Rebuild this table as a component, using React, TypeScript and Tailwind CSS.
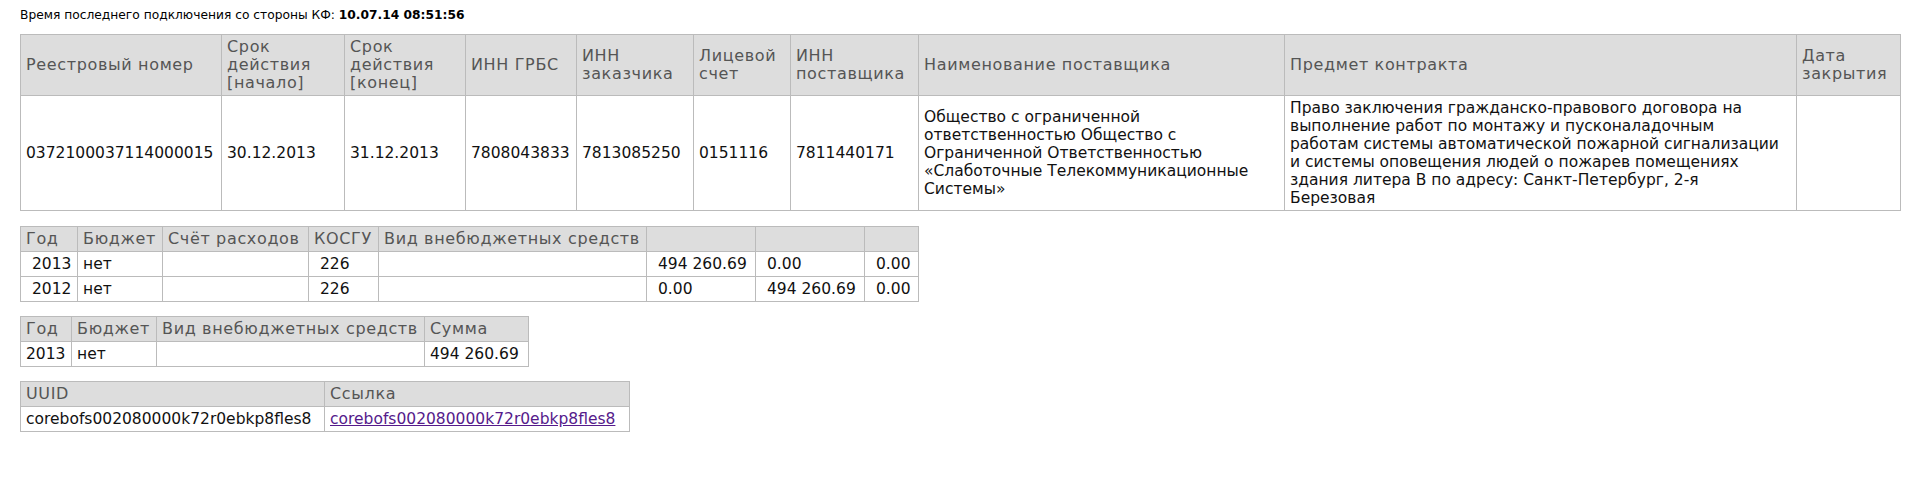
import React from "react";

const th =
  "border border-[#bbbbbb] bg-[#dddddd] text-[#555555] font-normal text-left align-middle px-[5px] py-[3px] whitespace-nowrap text-[16px] tracking-[0.65px] leading-[18px]";
const td =
  "border border-[#bbbbbb] text-[#111111] text-left align-middle px-[5px] py-[3px] whitespace-nowrap";
const tdn =
  "border border-[#bbbbbb] text-[#111111] text-left align-middle pl-[11px] pr-[5px] py-[3px] whitespace-nowrap";

function Lines({ lines }: { lines: string[] }) {
  return (
    <>
      {lines.map((l, i) => (
        <React.Fragment key={i}>
          {l}
          {i < lines.length - 1 && <br />}
        </React.Fragment>
      ))}
    </>
  );
}

export default function App() {
  return (
    <div
      className="bg-white min-h-[483px] px-[20px] pt-[8px] text-[15.5px] leading-[18px] text-[#111111]"
      style={{ fontFamily: '"DejaVu Sans", Verdana, sans-serif' }}
    >
      <div className="text-[12.25px] leading-[14px] text-black">
        Время последнего подключения со стороны КФ: <b>10.07.14 08:51:56</b>
      </div>

      <table className="mt-[12px] border-collapse table-fixed w-[1880px]">
        <colgroup>
          <col className="w-[201px]" />
          <col className="w-[123px]" />
          <col className="w-[121px]" />
          <col className="w-[111px]" />
          <col className="w-[117px]" />
          <col className="w-[97px]" />
          <col className="w-[128px]" />
          <col className="w-[366px]" />
          <col className="w-[512px]" />
          <col className="w-[104px]" />
        </colgroup>
        <thead>
          <tr>
            <th className={th}>Реестровый номер</th>
            <th className={th}>
              <Lines lines={["Срок", "действия", "[начало]"]} />
            </th>
            <th className={th}>
              <Lines lines={["Срок", "действия", "[конец]"]} />
            </th>
            <th className={th}>ИНН ГРБС</th>
            <th className={th}>
              <Lines lines={["ИНН", "заказчика"]} />
            </th>
            <th className={th}>
              <Lines lines={["Лицевой", "счет"]} />
            </th>
            <th className={th}>
              <Lines lines={["ИНН", "поставщика"]} />
            </th>
            <th className={th}>Наименование поставщика</th>
            <th className={th}>Предмет контракта</th>
            <th className={th}>
              <Lines lines={["Дата", "закрытия"]} />
            </th>
          </tr>
        </thead>
        <tbody>
          <tr>
            <td className={td}>0372100037114000015</td>
            <td className={td}>30.12.2013</td>
            <td className={td}>31.12.2013</td>
            <td className={td}>7808043833</td>
            <td className={td}>7813085250</td>
            <td className={td}>0151116</td>
            <td className={td}>7811440171</td>
            <td className={td}>
              <Lines
                lines={[
                  "Общество с ограниченной",
                  "ответственностью Общество с",
                  "Ограниченной Ответственностью",
                  "«Слаботочные Телекоммуникационные",
                  "Системы»",
                ]}
              />
            </td>
            <td className={td}>
              <Lines
                lines={[
                  "Право заключения гражданско-правового договора на",
                  "выполнение работ по монтажу и пусконаладочным",
                  "работам системы автоматической пожарной сигнализации",
                  "и системы оповещения людей о пожарев помещениях",
                  "здания литера В по адресу: Санкт-Петербург, 2-я",
                  "Березовая",
                ]}
              />
            </td>
            <td className={td}></td>
          </tr>
        </tbody>
      </table>

      <table className="mt-[15px] border-collapse table-fixed w-[898px]">
        <colgroup>
          <col className="w-[57px]" />
          <col className="w-[85px]" />
          <col className="w-[146px]" />
          <col className="w-[70px]" />
          <col className="w-[268px]" />
          <col className="w-[109px]" />
          <col className="w-[109px]" />
          <col className="w-[54px]" />
        </colgroup>
        <thead>
          <tr>
            <th className={th}>Год</th>
            <th className={th}>Бюджет</th>
            <th className={th}>Счёт расходов</th>
            <th className={th}>КОСГУ</th>
            <th className={th}>Вид внебюджетных средств</th>
            <th className={th}></th>
            <th className={th}></th>
            <th className={th}></th>
          </tr>
        </thead>
        <tbody>
          <tr>
            <td className={tdn}>2013</td>
            <td className={td}>нет</td>
            <td className={td}></td>
            <td className={tdn}>226</td>
            <td className={td}></td>
            <td className={tdn}>494 260.69</td>
            <td className={tdn}>0.00</td>
            <td className={tdn}>0.00</td>
          </tr>
          <tr>
            <td className={tdn}>2012</td>
            <td className={td}>нет</td>
            <td className={td}></td>
            <td className={tdn}>226</td>
            <td className={td}></td>
            <td className={tdn}>0.00</td>
            <td className={tdn}>494 260.69</td>
            <td className={tdn}>0.00</td>
          </tr>
        </tbody>
      </table>

      <table className="mt-[14px] border-collapse table-fixed w-[508px]">
        <colgroup>
          <col className="w-[51px]" />
          <col className="w-[85px]" />
          <col className="w-[268px]" />
          <col className="w-[104px]" />
        </colgroup>
        <thead>
          <tr>
            <th className={th}>Год</th>
            <th className={th}>Бюджет</th>
            <th className={th}>Вид внебюджетных средств</th>
            <th className={th}>Сумма</th>
          </tr>
        </thead>
        <tbody>
          <tr>
            <td className={td}>2013</td>
            <td className={td}>нет</td>
            <td className={td}></td>
            <td className={td}>494 260.69</td>
          </tr>
        </tbody>
      </table>

      <table className="mt-[14px] border-collapse table-fixed w-[609px]">
        <colgroup>
          <col className="w-[304px]" />
          <col className="w-[305px]" />
        </colgroup>
        <thead>
          <tr>
            <th className={th}>UUID</th>
            <th className={th}>Ссылка</th>
          </tr>
        </thead>
        <tbody>
          <tr>
            <td className={td}>corebofs002080000k72r0ebkp8fles8</td>
            <td className={td}>
              <a href="#" className="text-[#551a8b] underline">
                corebofs002080000k72r0ebkp8fles8
              </a>
            </td>
          </tr>
        </tbody>
      </table>
    </div>
  );
}
